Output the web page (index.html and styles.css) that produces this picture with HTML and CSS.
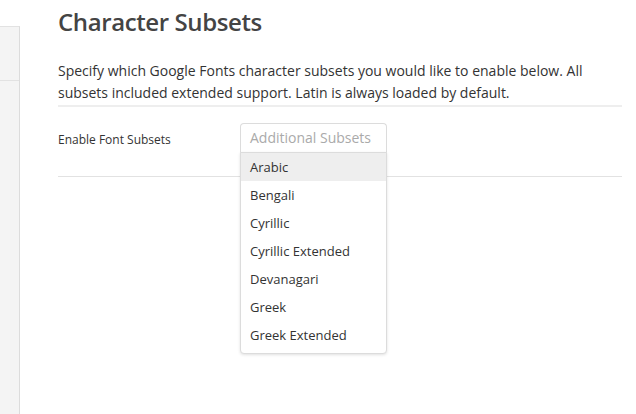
FILE: index.html
```html
<!DOCTYPE html>
<html lang="en">

<head>
  <meta charset="UTF-8" />
  <meta name="viewport" content="width=device-width, initial-scale=1.0" />
  <title>Character Subsets</title>
  <link rel="stylesheet" href="styles.css">
</head>

<body>
  <div class="page">
    <!-- 左侧菜单 -->
    <div class="sidebar">
      <div class="tab"></div>
    </div>

    <!-- 设置内容 -->
    <div class="main">
      <h2 class="title">Character Subsets</h2>
      <p class="desc">Specify which Google Fonts character subsets you would like to enable below. All subsets included extended support. Latin is always loaded by default.</p>

      <div class="row">
        <label class="label">Enable Font Subsets</label>
        <div class="select">
          <div class="select-box">Additional Subsets</div>
          <ul class="options">
            <li class="active">Arabic</li>
            <li>Bengali</li>
            <li>Cyrillic</li>
            <li>Cyrillic Extended</li>
            <li>Devanagari</li>
            <li>Greek</li>
            <li>Greek Extended</li>
          </ul>
        </div>
      </div>
    </div>
  </div>
</body>

</html>
```

FILE: styles.css
```css
* {
  margin: 0;
  padding: 0;
  box-sizing: border-box;
}

ul {
  list-style: none;
}

body {
  font-family: "Open Sans", "Liberation Sans", sans-serif;
  color: #333;
  background: #fff;
}

.page {
  display: flex;
  height: 414px;
  overflow: hidden;
}

.sidebar {
  width: 20px;
  margin-top: 26px;
  background: #f4f4f4;
  border-top: 1px solid #e2e2e2;
  border-right: 1px solid #dcdcdc;
}

.sidebar .tab {
  height: 54px;
  border-bottom: 1px solid #e2e2e2;
}

.main {
  width: 564px;
  margin-left: 38px;
}

.title {
  font-size: 24px;
  font-weight: 600;
  letter-spacing: -0.4px;
  color: #444;
  line-height: 32px;
  margin-top: 6px;
}

.desc {
  font-size: 14px;
  line-height: 22px;
  margin-top: 22px;
  padding-bottom: 1px;
  border-bottom: 2px solid #eee;
}

.row {
  display: flex;
  align-items: flex-start;
  padding-top: 16px;
  height: 70px;
  border-bottom: 1px solid #e2e2e2;
}

.label {
  width: 182px;
  font-size: 12px;
  line-height: 30px;
  padding-top: 2px;
}

.select {
  position: relative;
  width: 147px;
}

.select-box {
  height: 30px;
  padding-left: 9px;
  border: 1px solid #dcdcdc;
  border-bottom: none;
  border-radius: 4px 4px 0 0;
  font-size: 14px;
  line-height: 28px;
  color: #aaa;
  background: #fff;
}

.options {
  position: absolute;
  top: 29px;
  left: 0;
  width: 147px;
  background: #fff;
  border: 1px solid #dcdcdc;
  border-radius: 0 0 4px 4px;
  box-shadow: 0 1px 3px rgba(0, 0, 0, 0.12);
  padding-bottom: 4px;
}

.options li {
  height: 28px;
  line-height: 28px;
  padding-left: 9px;
  font-size: 13px;
  color: #333;
}

.options li.active {
  background: #eee;
}
```
